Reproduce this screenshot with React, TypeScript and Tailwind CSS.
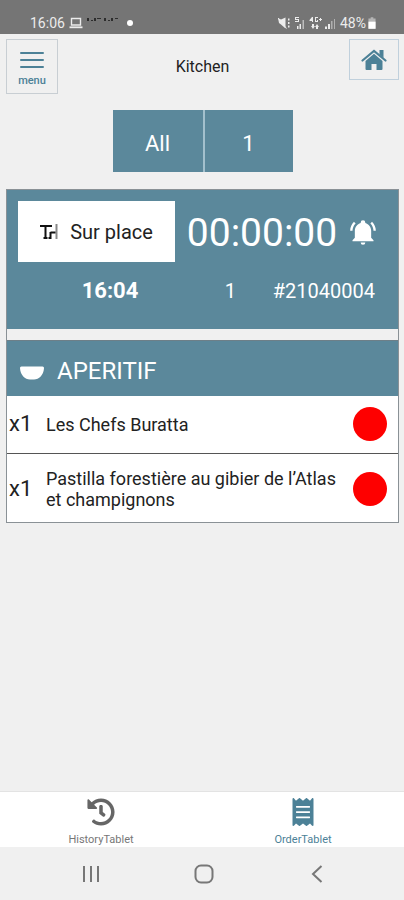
import { FaHistory, FaReceipt } from "react-icons/fa";

type OrderItem = {
  quantity: number;
  name: string;
};

const filters = ["All", "1"];

const items: OrderItem[] = [
  { quantity: 1, name: "Les Chefs Buratta" },
  { quantity: 1, name: "Pastilla forestière au gibier de l’Atlas et champignons" },
];

function LaptopIcon() {
  return (
    <svg viewBox="0 0 14 12" className="h-3 w-3.5" fill="none" stroke="currentColor" aria-hidden="true">
      <path d="M2.5 1.5h9v6.5h-9z" strokeWidth="1.4" />
      <path d="M0.5 10.3h13" strokeWidth="1.8" />
    </svg>
  );
}

function StatusIcons() {
  return (
    <svg viewBox="0 0 58 14" className="h-3.5 w-[58px]" fill="currentColor" aria-hidden="true">
      <path d="M0 2l3 1.500L7.500 1.500v11L3 8.500 1 7z" />
      <path d="M0 2l8.500 10.500" stroke="currentColor" strokeWidth="1" />
      <path d="M10 2.5h1.500v2H10zM10 6h1.500v2H10zM10 9.500h1.500v2H10z" />
      <path d="M17 1h4v1h-3v1h3v3h-4V5h3V4h-3zM19 10h1.500v3H19zM21.500 8h1.500v5h-1.500z" />
      <path d="M24.500 4h1.500v9h-1.500z" opacity="0.6" />
      <path d="M34 1l-2.500 3v1H34v1h1V1zM37 1h3v1h-2v3h1V4h1v2h-3zM42 2h1v1h1v1h-1v1h-1V4h-1V3h1z" />
      <path d="M35 13l-2-3h1V8h2v2h1zM39 8l2 3h-1v2h-2v-2h-1z" />
      <path d="M47 10.500h2V13h-2zM50 8h2v5h-2z" />
      <path d="M53 5h1.500v8H53zM56 3h1v10h-1z" opacity="0.5" />
    </svg>
  );
}

function BatteryIcon() {
  return (
    <svg viewBox="0 0 9 13" className="h-3 w-2" aria-hidden="true">
      <path d="M3 0h3v1.500h2.500V13h-8V1.500H3z" fill="#b5b5b5" />
      <path d="M0.500 5h8v8h-8z" fill="#fff" />
    </svg>
  );
}

function StatusBar() {
  return (
    <div className="flex h-[34px] shrink-0 items-end justify-between bg-[#757575] pr-7 pb-px pl-[30px] text-sm text-[#ececec]">
      <div className="flex items-center gap-1">
        <span>16:06</span>
        <LaptopIcon />
        <svg viewBox="0 0 32 6" className="mb-1.5 h-1.5 w-8" fill="#2d2d2d" aria-hidden="true">
          <path d="M0 1h2v3H0zM4 3h2v1H4zM7 1h2v3H7zM10 1h4v1h-4zM17 1h2v3h-2zM21 3h2v1h-2zM24 1h2v3h-2zM28 1h3v1h-3z" />
        </svg>
        <span className="ml-1 size-1.5 rounded-full bg-white" />
      </div>
      <div className="flex items-center gap-1">
        <StatusIcons />
        <span className="flex items-center gap-0.5">
          48%
          <BatteryIcon />
        </span>
      </div>
    </div>
  );
}

function HouseIcon() {
  return (
    <svg viewBox="0 0 26 22" className="h-[22px] w-[26px]" fill="currentColor" aria-hidden="true">
      <path d="M1.500 11.500L13 2l11.500 9.500" fill="none" stroke="currentColor" strokeWidth="2.200" strokeLinecap="round" />
      <path d="M18.500 1h4v8l-4-3.500z" />
      <path d="M4.500 12L13 4.800l8.500 7.200V20a1 1 0 0 1-1 1H15.500v-6h-5v6H5.500a1 1 0 0 1-1-1z" />
    </svg>
  );
}

function Header() {
  return (
    <header className="grid grid-cols-[1fr_auto_1fr] items-start pt-[5px] pr-[5px] pl-1.5">
      <button
        type="button"
        className="flex h-[55px] w-[52px] flex-col items-center justify-between border border-[#c8ced3] pt-[11px] pb-1.5 text-[#4c8197]"
      >
        <svg viewBox="0 0 24 18" className="h-[18px] w-6" stroke="currentColor" strokeWidth="2" strokeLinecap="round" aria-hidden="true">
          <path d="M1 2h22M1 9h22M1 16h22" />
        </svg>
        <span className="text-[11px] leading-3 font-medium">menu</span>
      </button>
      <h1 className="pt-4 text-base text-[#222]">Kitchen</h1>
      <button
        type="button"
        aria-label="Home"
        className="flex h-[41px] w-[50px] items-center justify-center justify-self-end border border-[#c0d0dc] text-[#4c8197]"
      >
        <HouseIcon />
      </button>
    </header>
  );
}

function TableIcon() {
  return (
    <svg viewBox="0 0 18 16" className="h-4 w-[18px]" fill="none" aria-hidden="true">
      <path d="M0 2h12M5.5 2v12M3.5 14h4" stroke="#111" strokeWidth="2" />
      <path d="M16.5 0v15" stroke="#888" strokeWidth="2" />
      <path d="M15.5 8.5h-5M10.5 8v6M8.5 14h3" stroke="#111" strokeWidth="2" />
    </svg>
  );
}

function BellIcon() {
  return (
    <svg viewBox="0 0 24 24" className="size-7" fill="currentColor" aria-hidden="true">
      <path d="M21 19v1H3v-1l2-2v-6c0-3.1 2.03-5.83 5-6.71V4a2 2 0 0 1 4 0v.29c2.97.88 5 3.61 5 6.71v6l2 2M14 21a2 2 0 0 1-4 0M19.75 3.19l-1.42 1.42C20.04 6.3 21 8.6 21 11h2c0-2.93-1.16-5.75-3.25-7.81M1 11h2c0-2.4.96-4.7 2.67-6.39L4.25 3.19C2.16 5.25 1 8.07 1 11z" />
    </svg>
  );
}

function OrderSummary() {
  return (
    <div className="bg-[#5b889b] px-[11px] pt-[11px] pb-6 text-white">
      <div className="flex items-center justify-between">
        <button
          type="button"
          className="flex h-[61px] w-[157px] items-center justify-center gap-3 bg-white text-xl text-[#222]"
        >
          <TableIcon />
          Sur place
        </button>
        <span className="pt-1 text-[39px] leading-none">00:00:00</span>
        <button type="button" aria-label="Ring" className="mr-2.5">
          <BellIcon />
        </button>
      </div>
      <div className="mt-[15px] flex items-center justify-between pr-3 text-xl leading-7">
        <span className="w-[184px] text-center text-[22px] font-bold">16:04</span>
        <span>1</span>
        <span className="pl-3.5">#21040004</span>
      </div>
    </div>
  );
}

function ItemRow({ quantity, name }: OrderItem) {
  return (
    <li className="flex items-center border-b border-[#555] bg-white pt-[11px] pb-3 pr-[11px] pl-0.5 text-[#222] last:border-b-0 last:pt-3.5">
      <span className="w-[37px] shrink-0 text-[22px] leading-6">x{quantity}</span>
      <span className="flex-1 text-lg leading-[21px]">{name}</span>
      <button
        type="button"
        aria-label={`${name} status`}
        className="ml-2.5 size-[34px] shrink-0 rounded-full bg-[#fe0000]"
      />
    </li>
  );
}

function TabBar() {
  return (
    <nav className="flex h-14 shrink-0 border-t border-[#e3e3e3] bg-white text-[11px] leading-3">
      <a href="#history" className="flex flex-1 flex-col items-center justify-between pt-1.5 pb-px text-[#777]">
        <FaHistory className="size-7 text-[#666]" aria-hidden="true" />
        HistoryTablet
      </a>
      <a href="#orders" className="flex flex-1 flex-col items-center justify-between pt-1.5 pb-px text-[#4c8197]">
        <FaReceipt className="size-7" aria-hidden="true" />
        OrderTablet
      </a>
    </nav>
  );
}

function SystemNav() {
  return (
    <div className="flex h-[53px] shrink-0 items-center justify-between pr-[76px] pl-20 text-[#777]">
      <button type="button" aria-label="Recent apps">
        <svg viewBox="0 0 22 22" className="size-[22px]" stroke="currentColor" strokeWidth="2" aria-hidden="true">
          <path d="M4 3v16M11 3v16M18 3v16" />
        </svg>
      </button>
      <button type="button" aria-label="Home screen">
        <svg viewBox="0 0 22 22" className="size-[22px]" fill="none" stroke="currentColor" strokeWidth="2" aria-hidden="true">
          <rect x="2.5" y="2.5" width="17" height="17" rx="5.5" />
        </svg>
      </button>
      <button type="button" aria-label="Back">
        <svg viewBox="0 0 22 22" className="size-[22px]" fill="none" stroke="currentColor" strokeWidth="2" aria-hidden="true">
          <path d="M15.5 3L7 11l8.5 8" />
        </svg>
      </button>
    </div>
  );
}

export default function App() {
  return (
    <div className="flex min-h-screen flex-col bg-[#f0f0f0] font-['Roboto',sans-serif]">
      <StatusBar />
      <Header />
      <main className="flex-1 pt-4 pr-[5px] pl-1.5">
        <div className="flex justify-center">
          {filters.map((filter) => (
            <button
              key={filter}
              type="button"
              className="h-[62px] w-[90px] border-l-2 border-[#a3c0cd] bg-[#5b889b] pt-1 text-[22px] text-white first:border-l-0"
            >
              {filter}
            </button>
          ))}
        </div>
        <section className="mt-[17px] border border-[#8a9196]">
          <OrderSummary />
          <h2 className="mt-[11px] flex h-14 items-center gap-3 border-t border-[#6d7f88] bg-[#5b889b] px-3 text-2xl text-white">
            <svg viewBox="0 0 26 24" className="h-6 w-[26px]" fill="currentColor" aria-hidden="true">
              <path d="M2.5 9.5h21a1.5 1.5 0 0 1 1.5 1.7C24.5 18 20 22.500 15 22.500H11C6 22.500 1.500 18 1 11.200A1.500 1.500 0 0 1 2.500 9.500z" />
            </svg>
            <span className="pt-1">APERITIF</span>
          </h2>
          <ul>
            {items.map((item) => (
              <ItemRow key={item.name} {...item} />
            ))}
          </ul>
        </section>
      </main>
      <TabBar />
      <SystemNav />
    </div>
  );
}
